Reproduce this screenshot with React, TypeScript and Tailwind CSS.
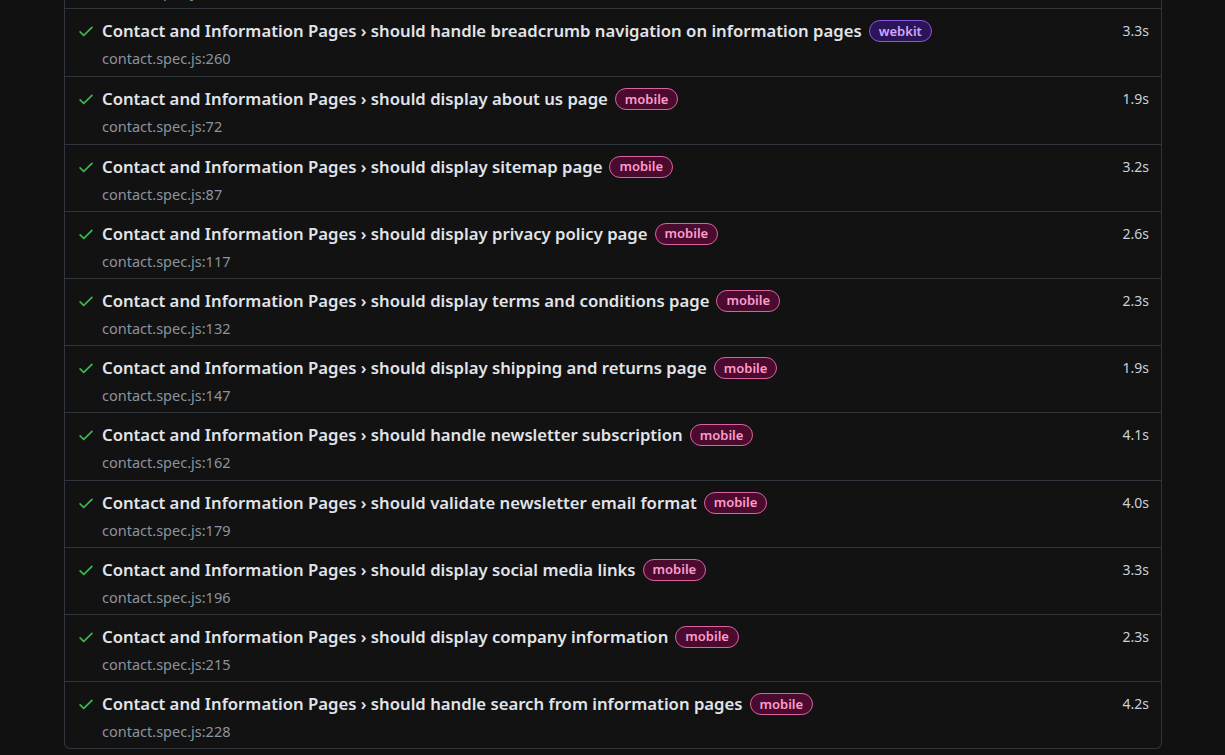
import React from 'react';

type Test = { name: string; line: number; tag: 'webkit' | 'mobile'; time: string };

const tests: Test[] = [
  { name: 'should handle breadcrumb navigation on information pages', line: 260, tag: 'webkit', time: '3.3s' },
  { name: 'should display about us page', line: 72, tag: 'mobile', time: '1.9s' },
  { name: 'should display sitemap page', line: 87, tag: 'mobile', time: '3.2s' },
  { name: 'should display privacy policy page', line: 117, tag: 'mobile', time: '2.6s' },
  { name: 'should display terms and conditions page', line: 132, tag: 'mobile', time: '2.3s' },
  { name: 'should display shipping and returns page', line: 147, tag: 'mobile', time: '1.9s' },
  { name: 'should handle newsletter subscription', line: 162, tag: 'mobile', time: '4.1s' },
  { name: 'should validate newsletter email format', line: 179, tag: 'mobile', time: '4.0s' },
  { name: 'should display social media links', line: 196, tag: 'mobile', time: '3.3s' },
  { name: 'should display company information', line: 215, tag: 'mobile', time: '2.3s' },
  { name: 'should handle search from information pages', line: 228, tag: 'mobile', time: '4.2s' },
];

function Check() {
  return (
    <svg width="18" height="18" viewBox="0 0 16 16" className="shrink-0 text-[#3fb950]" fill="currentColor">
      <path d="M13.78 4.22a.75.75 0 0 1 0 1.06l-7.25 7.25a.75.75 0 0 1-1.06 0L2.22 9.28a.75.75 0 0 1 1.06-1.06L6 10.94l6.72-6.72a.75.75 0 0 1 1.06 0Z" />
    </svg>
  );
}

function Tag({ tag }: { tag: Test['tag'] }) {
  const cls =
    tag === 'webkit'
      ? 'bg-[#2b1457] border-[#8957e5] text-[#d2a8ff]'
      : 'bg-[#4a0b2e] border-[#db61a2] text-[#ff9bce]';
  return (
    <span className={`ml-[7px] inline-flex h-[22px] items-center rounded-full border px-[9px] text-[13px] font-semibold leading-none ${cls}`}>
      {tag}
    </span>
  );
}

function Row({ t }: { t: Test }) {
  return (
    <div className="flex h-[67.2px] items-start border-t border-[#30363d] pl-[12px] pr-3 pt-[11px] first:border-t-0">
      <div className="mt-[2px]">
        <Check />
      </div>
      <div className="ml-[7px] flex min-w-0 flex-1 flex-col">
        <div className="flex items-center">
          <span className="text-[16.7px] font-semibold leading-[20px] text-[#e1e4e8]">
            Contact and Information Pages › {t.name}
          </span>
          <Tag tag={t.tag} />
        </div>
        <div className="mt-[8px] text-[14.5px] leading-[17px] text-[#8b949e]">contact.spec.js:{t.line}</div>
      </div>
      <div className="pt-[3px] text-[14px] leading-[16px] text-[#c9d1d9]">{t.time}</div>
    </div>
  );
}

export default function App() {
  return (
    <div className="h-[755px] overflow-hidden bg-[#111111]" style={{ fontFamily: '"Noto Sans", "Open Sans", sans-serif' }}>
      <div className="mx-[64px] -mt-[59px] w-[1098px] rounded-b-md border border-t-0 border-[#30363d] bg-[#121212]">
        <div className="flex h-[67.2px] items-start pl-[37px] pt-[42px] text-[14.5px] leading-[17px] text-[#8b949e]">
          contact.spec.js:245
        </div>
        <div className="border-t border-[#30363d]">
          {tests.map((t) => (
            <Row key={t.line} t={t} />
          ))}
        </div>
      </div>
    </div>
  );
}
